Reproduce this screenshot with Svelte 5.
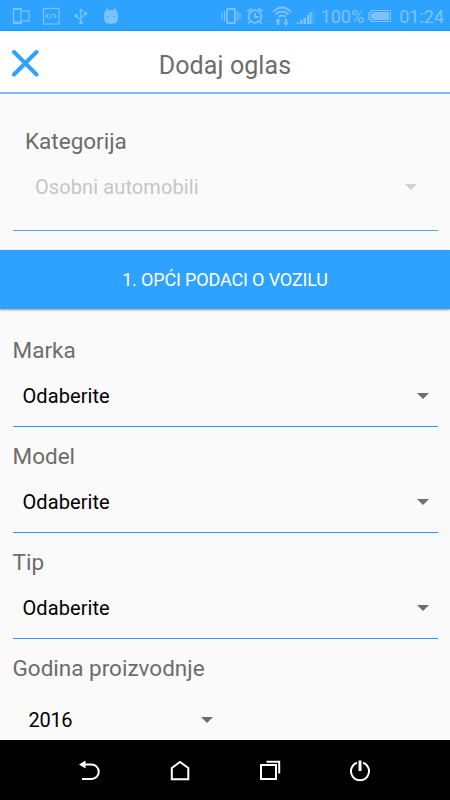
<script>
  let category = "Osobni automobili";
  let year = "2016";

  let fields = [
    { label: "Marka", value: "Odaberite" },
    { label: "Model", value: "Odaberite" },
    { label: "Tip", value: "Odaberite" },
  ];
</script>

<div class="screen">
  <div class="status-bar">
    <div class="status-left">
      <svg width="18" height="18" viewBox="0 0 18 18">
        <path class="line" d="M9.500 3V1.500h-8v15h8V15" />
        <path class="fill" d="M1 1h9v2H1zM1 14.500h9V17H1z" />
        <rect class="line" x="9" y="4" width="8" height="10" />
      </svg>
      <svg width="18" height="18" viewBox="0 0 18 18">
        <rect class="line" x="1.500" y="1.500" width="15.500" height="15.500" />
        <path class="line" d="M6.500 6.800 4 9l2.500 2.200M11.500 6.800 14 9l-2.500 2.200M10 6.500l-2 5" />
      </svg>
      <svg width="18" height="18" viewBox="0 0 18 18">
        <path class="line" d="M9 3v12M9 13c0-2-5-1-5-5M9 11c0-2 4-1 4-5" />
        <path class="fill" d="M9 1.500l2.500 3h-5zM12 5h3v3h-3zM7.500 14h3v3h-3z" />
        <circle class="fill" cx="4" cy="8.500" r="1.700" />
      </svg>
      <svg width="18" height="18" viewBox="0 0 18 18">
        <path class="line" d="M5.500 4 4.800 0.500M12.500 4 13.200 0.500" />
        <path
          class="fill"
          fill-rule="evenodd"
          d="M4 3h10q2 2 2 6.500 0 4.500-1.500 6.500-5.500 1.500-11 0Q2 14 2 9.500q0-4.500 2-6.500zM5 9.500a.8.8 0 1 0 1.600 0a.8.8 0 1 0-1.600 0M11.400 9.500a.8.8 0 1 0 1.600 0a.8.8 0 1 0-1.600 0"
        />
      </svg>
    </div>
    <div class="status-right">
      <svg class="vibrate" width="20" height="18" viewBox="0 0 20 18">
        <rect class="thick" x="6" y="2" width="8" height="14" rx="1" />
        <path class="line" d="M3.500 4v10M1 6v6M16.500 4v10M19 6v6" />
      </svg>
      <svg class="alarm" width="18" height="18" viewBox="0 0 18 18">
        <circle class="thick" cx="9" cy="9.500" r="6.300" />
        <path class="thick" d="M9 6v4h3.500M1.500 4.500l4-3M12.500 1.500l4 3M4.500 14l-2 2.500M13.500 14l2 2.500" />
      </svg>
      <svg class="wifi" width="20" height="20" viewBox="0 0 20 20">
        <path class="thick" d="M1 6q9-9 18 0M3.500 8.500q6.500-6 13 0M6.500 11q3.500-3 7 0" />
        <path class="fill" d="M6 12l3 3.500H7.200V19H4.800v-3.500H3zM14 20l-3-3.500h1.800V13h2.400v3.500H17z" />
      </svg>
      <svg class="signal" width="18" height="14" viewBox="0 0 18 14">
        <path class="fill" d="M0 12h2v2H0zM3 10h2.500v4H3zM6.500 8H9v6H6.500zM10 5h2v9h-2zM12.500 2h2v12h-2z" />
        <path class="faint" d="M15.500 0h2v14h-2z" />
      </svg>
      <span class="percent">100%</span>
      <svg class="battery" width="23" height="12" viewBox="0 0 23 12">
        <path class="line" d="M3 .5h19.500v11H3V9H.5V3H3z" />
        <path class="fill" d="M4.500 2h16.500v8H4.500V8H2.500V4h2z" />
      </svg>
      <span class="clock">01:24</span>
    </div>
  </div>

  <header>
    <button class="close" aria-label="Zatvori">
      <svg width="28" height="28" viewBox="0 0 28 28">
        <path d="M3 3l22.500 22.500M25.500 3 3 25.500" />
      </svg>
    </button>
    <h1>Dodaj oglas</h1>
  </header>

  <main>
    <section class="category">
      <div class="label">Kategorija</div>
      <div class="select disabled">
        <span class="category-value">{category}</span>
        <i class="arrow"></i>
      </div>
    </section>

    <div class="banner">1. OPĆI PODACI O VOZILU</div>

    <section class="fields">
      {#each fields as field}
        <div class="field">
          <div class="label">{field.label}</div>
          <div class="select">
            <span>{field.value}</span>
            <i class="arrow"></i>
          </div>
        </div>
      {/each}
      <div class="field year">
        <div class="label">Godina proizvodnje</div>
        <div class="select">
          <span>{year}</span>
          <i class="arrow"></i>
        </div>
      </div>
    </section>
  </main>

  <nav>
    <svg width="24" height="24" viewBox="0 0 24 24">
      <path d="M5 5.500h8.500a7 7 0 0 1 0 14.500H4" />
      <path class="solid" d="M1 5.500 7.500 1.500v8z" />
    </svg>
    <svg width="24" height="24" viewBox="0 0 24 24">
      <path d="M3.800 9 12 3l8.300 6v11.200H3.800z" />
    </svg>
    <svg width="24" height="24" viewBox="0 0 24 24">
      <path d="M3 6h15v14H3zM8.500 2.800h12.700V14.500" />
    </svg>
    <svg width="24" height="24" viewBox="0 0 24 24">
      <path d="M9 3.700a9 9 0 1 0 6 0" />
      <path class="power" d="M12 1.500v10.500" />
    </svg>
  </nav>
</div>

<style>
  :global(body) {
    margin: 0;
    background: #fafafa;
  }

  .screen {
    width: 450px;
    height: 800px;
    display: flex;
    flex-direction: column;
    overflow: hidden;
    background: #fafafa;
    font-family: Roboto, "Liberation Sans", sans-serif;
    color: #6c6c6c;
  }

  .status-bar {
    box-sizing: border-box;
    height: 31px;
    flex: none;
    display: flex;
    justify-content: space-between;
    padding: 1px 6px 0 12px;
    background: #2ea2ff;
    border-bottom: 1px solid #0c9aff;
    color: #7dc4ff;
  }

  .status-left,
  .status-right {
    display: flex;
    align-items: center;
  }

  .status-left {
    gap: 12px;
  }

  .line,
  .thick {
    fill: none;
    stroke: #7dc4ff;
    stroke-width: 1.2;
  }

  .thick {
    stroke-width: 1.8;
  }

  .fill {
    fill: #7dc4ff;
  }

  .faint {
    fill: #4aafff;
  }

  .alarm {
    margin-left: 5px;
  }

  .wifi {
    margin: 0 5px 0 8px;
  }

  .signal {
    margin-top: 2px;
  }

  .percent,
  .clock {
    font-size: 18px;
    line-height: 28px;
    padding-top: 2px;
  }

  .percent {
    margin-left: 6px;
  }

  .battery {
    margin: 0 8px 0 4px;
  }

  header {
    box-sizing: border-box;
    position: relative;
    height: 63px;
    flex: none;
    display: flex;
    align-items: center;
    justify-content: center;
    background: #fff;
    border-bottom: 2px solid #7fbcff;
  }

  .close {
    position: absolute;
    left: 11px;
    top: 18px;
    padding: 0;
    border: 0;
    background: none;
    line-height: 0;
  }

  .close path {
    fill: none;
    stroke: #2ea2ff;
    stroke-width: 4;
    stroke-linecap: round;
  }

  h1 {
    margin: 8px 0 0;
    font-size: 25px;
    line-height: 30px;
    font-weight: 400;
    letter-spacing: 0.1px;
  }

  main {
    flex: 1;
    min-height: 0;
    overflow: hidden;
  }

  .label {
    font-size: 22.5px;
    line-height: 28px;
  }

  .select {
    display: flex;
    align-items: center;
    justify-content: space-between;
    font-size: 20px;
    line-height: 24px;
    color: #000;
  }

  .arrow {
    border: 6px solid transparent;
    border-top-color: #6f6f6f;
    border-bottom: 0;
  }

  .category {
    box-sizing: border-box;
    height: 137px;
    margin: 0 12.5px;
    padding: 33px 21px 0 12.5px;
    border-bottom: 1px solid #4ea8ff;
  }

  .disabled {
    padding: 20px 0 0 10px;
    color: #c6c6c6;
  }

  .category-value {
    letter-spacing: 0.1px;
  }

  .disabled .arrow {
    border-top-color: #d2d2d2;
  }

  .banner {
    height: 59px;
    margin-top: 19px;
    background: #2ea2ff;
    box-shadow: 0 1px 2px rgba(0, 0, 0, 0.4);
    color: #fff;
    font-size: 18px;
    line-height: 60px;
    letter-spacing: -0.15px;
    text-align: center;
  }

  .fields {
    padding: 12px 12.5px;
  }

  .field {
    box-sizing: border-box;
    height: 106px;
    padding-top: 15px;
    border-bottom: 1px solid #2a99ff;
  }

  .field .select {
    padding: 20px 9px 0 10px;
  }

  .field .select span {
    letter-spacing: 0.08px;
  }

  .year {
    border: 0;
  }

  .field.year .select {
    width: 184px;
    padding: 26px 0 0 16px;
  }

  .year .select span {
    letter-spacing: -0.3px;
  }

  nav {
    box-sizing: border-box;
    height: 60px;
    flex: none;
    display: flex;
    align-items: center;
    justify-content: center;
    gap: 66px;
    padding-top: 1px;
    background: #000;
  }

  nav path {
    fill: none;
    stroke: #fff;
    stroke-width: 2;
  }

  nav .solid {
    fill: #fff;
    stroke: none;
  }

  nav .power {
    stroke-width: 3;
  }
</style>
